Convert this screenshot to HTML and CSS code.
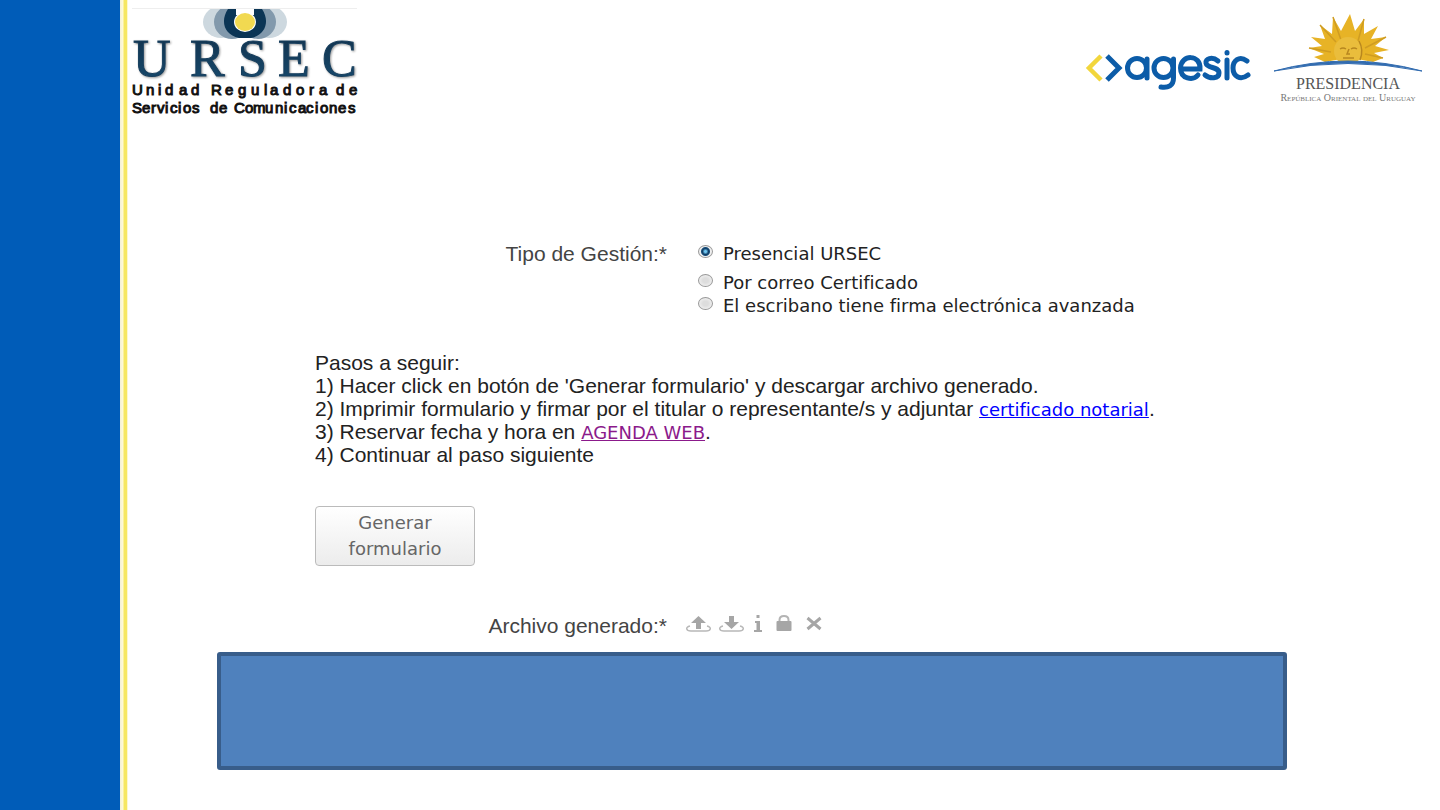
FILE: index.html
```html
<!DOCTYPE html>
<html lang="es">
<head>
<meta charset="utf-8">
<meta name="viewport" content="width=device-width, initial-scale=1">
<title>URSEC - Tipo de Gestión</title>
<link rel="stylesheet" href="styles.css">
</head>
<body>
<div class="page">
  <aside class="stripe"></aside>
  <div class="content">
    <header class="header">
      <svg class="logo-ursec" width="232" height="112" viewBox="130 6 232 112" role="img" aria-label="URSEC">
        <defs>
          <linearGradient id="navy" x1="0" y1="0" x2="0" y2="1">
            <stop offset="0" stop-color="#12304a"/><stop offset="1" stop-color="#174c70"/>
          </linearGradient>
          <clipPath id="top"><rect x="195" y="9" width="100" height="32"/></clipPath>
        </defs>
        <path d="M132 8.500H357" stroke="#eee"/>
        <g clip-path="url(#top)">
          <ellipse cx="221" cy="22" rx="18" ry="16" fill="#cdd8df"/>
          <ellipse cx="269" cy="22" rx="18" ry="16" fill="#cdd8df"/>
          <ellipse cx="232" cy="22" rx="18" ry="17" fill="#8299ac"/>
          <ellipse cx="258" cy="22" rx="18" ry="17" fill="#8299ac"/>
          <path d="M228 9C220 21 224 35 239 38H251C266 35 270 21 262 9H254V15H236V9Z" fill="#0b3555"/>
          <path d="M236 6H254V15H236Z" fill="#fff"/>
          <ellipse cx="245" cy="22" rx="11" ry="10" fill="#fff"/>
          <ellipse cx="245" cy="22" rx="10" ry="9" fill="#f1d951"/>
        </g>
        <text class="ursec-name" x="133 190 238 278 322" y="76">URSEC</text>
        <text class="ursec-line" x="132 146 158 165 179 191 203 211 225 238 251 264 270 283 296 309 319 330 336 349" y="95">Unidad Reguladora de</text>
        <text class="ursec-line" x="132 142 151 157 165 170 178 183 192 200 210 219 227 234 245 253 265 275 284 289 298 306 315 320 329 338 348" y="113">Servicios de Comunicaciones</text>
      </svg>
      <div class="partners">
        <svg class="agesic" width="168" height="46" viewBox="1085 47 168 46" role="img" aria-label="agesic" fill="none" stroke-width="4.500">
          <path d="M1101 55L1089 67L1101 79" stroke="#f2d63c"/>
          <path d="M1107 55L1119 67L1107 79" stroke="#0c5ca8" stroke-width="5"/>
          <g stroke="#0c5ca8" stroke-width="5" stroke-linecap="round">
            <circle cx="1137" cy="67" r="9.500"/><path d="M1147 58V77"/>
            <circle cx="1163.500" cy="67" r="9.500"/><path d="M1173.500 58V77C1173.500 85 1168 87 1161 86"/>
            <path d="M1181 68H1200C1201 53 1181 53 1180.500 67C1180.500 78 1193 80 1198 74"/>
            <path d="M1218 60C1212 55 1205 58 1206 62C1207 68 1219 65 1219 72C1219 78 1210 78 1205 74"/>
            <path d="M1227 59V77M1247 60C1239 54 1233 60 1233 67C1233 75 1240 80 1248 74"/>
            <path d="M1227 51.500V52"/>
          </g>
        </svg>
        <svg width="150" height="96" viewBox="1273 10 150 96" role="img" aria-label="Presidencia República Oriental del Uruguay">
          <path d="M1325 62L1314 57L1324 54L1309 48L1322 46L1311 37L1325 39L1320 25L1332 34L1333 17L1341 31L1350 14L1355 31L1364 19L1364 34L1378 26L1371 39L1386 37L1375 46L1389 50L1374 53L1383 58L1373 62Q1349 56 1325 62Z" fill="#e7b326"/>
          <path d="M1333 17L1341 40M1309 48L1331 52M1320 25L1336 42M1364 19L1358 41M1386 37L1365 48M1383 58L1365 54" stroke="#cf9c22" stroke-width="1.500"/>
          <ellipse cx="1348" cy="51" rx="14" ry="14" fill="#eabd3c"/>
          <path d="M1340 49Q1343 47 1346 49M1351 49Q1354 47 1357 49M1349 49L1347 54H1350M1343 58H1354M1359 41Q1364 50 1360 60" fill="none" stroke="#b8871f" stroke-width="1.500"/>
          <path d="M1300 68Q1348 55 1396 68L1370 72H1320Z" fill="#fff"/>
          <path d="M1274 71Q1348 51 1422 71Q1348 56 1274 71Z" fill="#326cb0" stroke="#326cb0"/>
          <text class="pres-name" x="1348" y="89">PRESIDENCIA</text>
          <text class="pres-sub" x="1348" y="101">República Oriental del Uruguay</text>
        </svg>
      </div>
    </header>
    <main>
      <form class="form">
        <div class="row" role="radiogroup" aria-labelledby="tipo">
          <span class="label" id="tipo">Tipo de Gestión:*</span>
          <div class="options">
            <label class="option first"><input class="radio" type="radio" name="gestion" checked>Presencial URSEC</label>
            <label class="option"><input class="radio" type="radio" name="gestion">Por correo Certificado</label>
            <label class="option"><input class="radio" type="radio" name="gestion">El escribano tiene firma electrónica avanzada</label>
          </div>
        </div>
        <div class="steps">
          <p>Pasos a seguir:</p>
          <p>1) Hacer click en botón de 'Generar formulario' y descargar archivo generado.</p>
          <p>2) Imprimir formulario y firmar por el titular o representante/s y adjuntar <a class="link" href="#certificado">certificado notarial</a>.</p>
          <p>3) Reservar fecha y hora en <a class="link visited" href="#agenda">AGENDA WEB</a>.</p>
          <p>4) Continuar al paso siguiente</p>
        </div>
        <button class="generate" type="button">Generar formulario</button>
        <div class="file-row">
          <span class="label">Archivo generado:*</span>
          <div class="tools">
            <button class="tool" type="button" aria-label="Subir"><svg width="25" height="20" viewBox="0 0 25 20"><path d="M12.500 2L20 9H15V15H10V9H5Z" fill="#a6a6a6"/><path d="M4 12C-1 13 0 17 5 17H20C25 17 26 13 21 12" fill="none" stroke="#b8b8b8" stroke-width="1.500"/></svg></button>
            <button class="tool" type="button" aria-label="Descargar"><svg width="25" height="20" viewBox="0 0 25 20"><path d="M10 2H15V8H20L12.500 15L5 8H10Z" fill="#a6a6a6"/><path d="M4 12C-1 13 0 17 5 17H20C25 17 26 13 21 12" fill="none" stroke="#b8b8b8" stroke-width="1.500"/></svg></button>
            <button class="tool info" type="button" aria-label="Información"><svg width="8" height="20" viewBox="0 0 8 20"><path d="M2.500 1H5.500V4H2.500ZM1 7H6V16H8V18H0V16H2.500V9H1Z" fill="#a6a6a6"/></svg></button>
            <button class="tool lock" type="button" aria-label="Bloquear"><svg width="16" height="20" viewBox="0 0 16 20"><path d="M3.500 9V6Q3.500 2 8 2T12.500 6V9" fill="none" stroke="#b4b4b4" stroke-width="2"/><rect x="0.500" y="7" width="15" height="10" rx="1" fill="#a6a6a6"/></svg></button>
            <button class="tool" type="button" aria-label="Eliminar"><svg width="16" height="20" viewBox="0 0 16 20"><path d="M1.500 4L14.500 15M14.500 4L1.500 15" stroke="#a6a6a6" stroke-width="3"/></svg></button>
          </div>
        </div>
      </form>
      <div class="panel"></div>
    </main>
  </div>
</div>
</body>
</html>
```
FILE: styles.css
```css
* { box-sizing: border-box; }
body {
  margin: 0;
  background: #fff;
  color: #222;
  font: 21px/23px "Liberation Sans", Arial, sans-serif;
}
.page { display: flex; min-height: 100vh; }
.stripe {
  flex: 0 0 128px;
  background: linear-gradient(to right, #005cb8 120px, #f3f0d8 120px, #fffbd8 123px, #f6e763 124px, #f6e763 127px, #fdf8cf 127px);
}
.content { flex: 1; min-width: 0; }
.header {
  display: flex;
  justify-content: space-between;
  align-items: flex-start;
  padding: 6px 17px 0 2px;
}
.partners { display: flex; align-items: flex-start; gap: 20px; padding-top: 4px; }
.agesic { margin-top: 38px; }
.ursec-name { font: 52px "Liberation Serif", serif; fill: url(#navy); stroke: #173f5e; stroke-width: 1px; filter: drop-shadow(1px 1px 1px #999); }
.ursec-line { font: 15px "Liberation Sans", Arial, sans-serif; fill: #111; stroke: #111; stroke-width: 1px; }
.pres-name { font: 16px "Liberation Serif", serif; fill: #555; text-anchor: middle; }
.pres-sub { font: small-caps 10px "Liberation Serif", serif; fill: #777; text-anchor: middle; }
.form { padding: 124px 128px 0 187px; }
.row, .file-row {
  display: grid;
  grid-template-columns: 352px 1fr;
}
.row { column-gap: 31px; }
.file-row { column-gap: 19px; margin-top: 48px; }
.label { text-align: right; color: #444; }
.options { font: 18px/23px "DejaVu Sans", Verdana, sans-serif; }
.option { display: flex; align-items: flex-start; gap: 10px; }
.first { margin-bottom: 6px; }
.radio {
  appearance: none;
  flex: none;
  width: 15px;
  height: 13px;
  margin: 3px 0 0;
  border: 1px solid #999;
  border-radius: 50%;
  background: radial-gradient(#ddd 30%, #fafafa);
}
.radio:checked { background: radial-gradient(circle, #6ec5f0 1px, #123e66 3px, #164e7c 4px, #eee 5px); }
.steps { margin-top: 34px; }
.steps p { margin: 0; }
.link { color: #00f; font: 18px/20px "DejaVu Sans", Verdana, sans-serif; }
.visited { color: #8b1a8b; }
.generate {
  display: block;
  width: 160px;
  margin-top: 40px;
  padding: 3px 20px;
  border: 1px solid #bbb;
  border-radius: 4px;
  background: linear-gradient(#fff, #ececec);
  color: #666;
  font: 18px/26px "DejaVu Sans", Verdana, sans-serif;
}
.tools { display: flex; align-items: flex-start; gap: 8px; }
.tool { display: flex; padding: 0; border: 0; background: none; }
.info { margin-left: 2px; }
.lock { margin: 0 6px 0 6px; }
.panel {
  height: 118px;
  margin: 15px 153px 40px 89px;
  border: 4px solid #385d8a;
  border-radius: 3px;
  background: #4f81bd;
}
```
